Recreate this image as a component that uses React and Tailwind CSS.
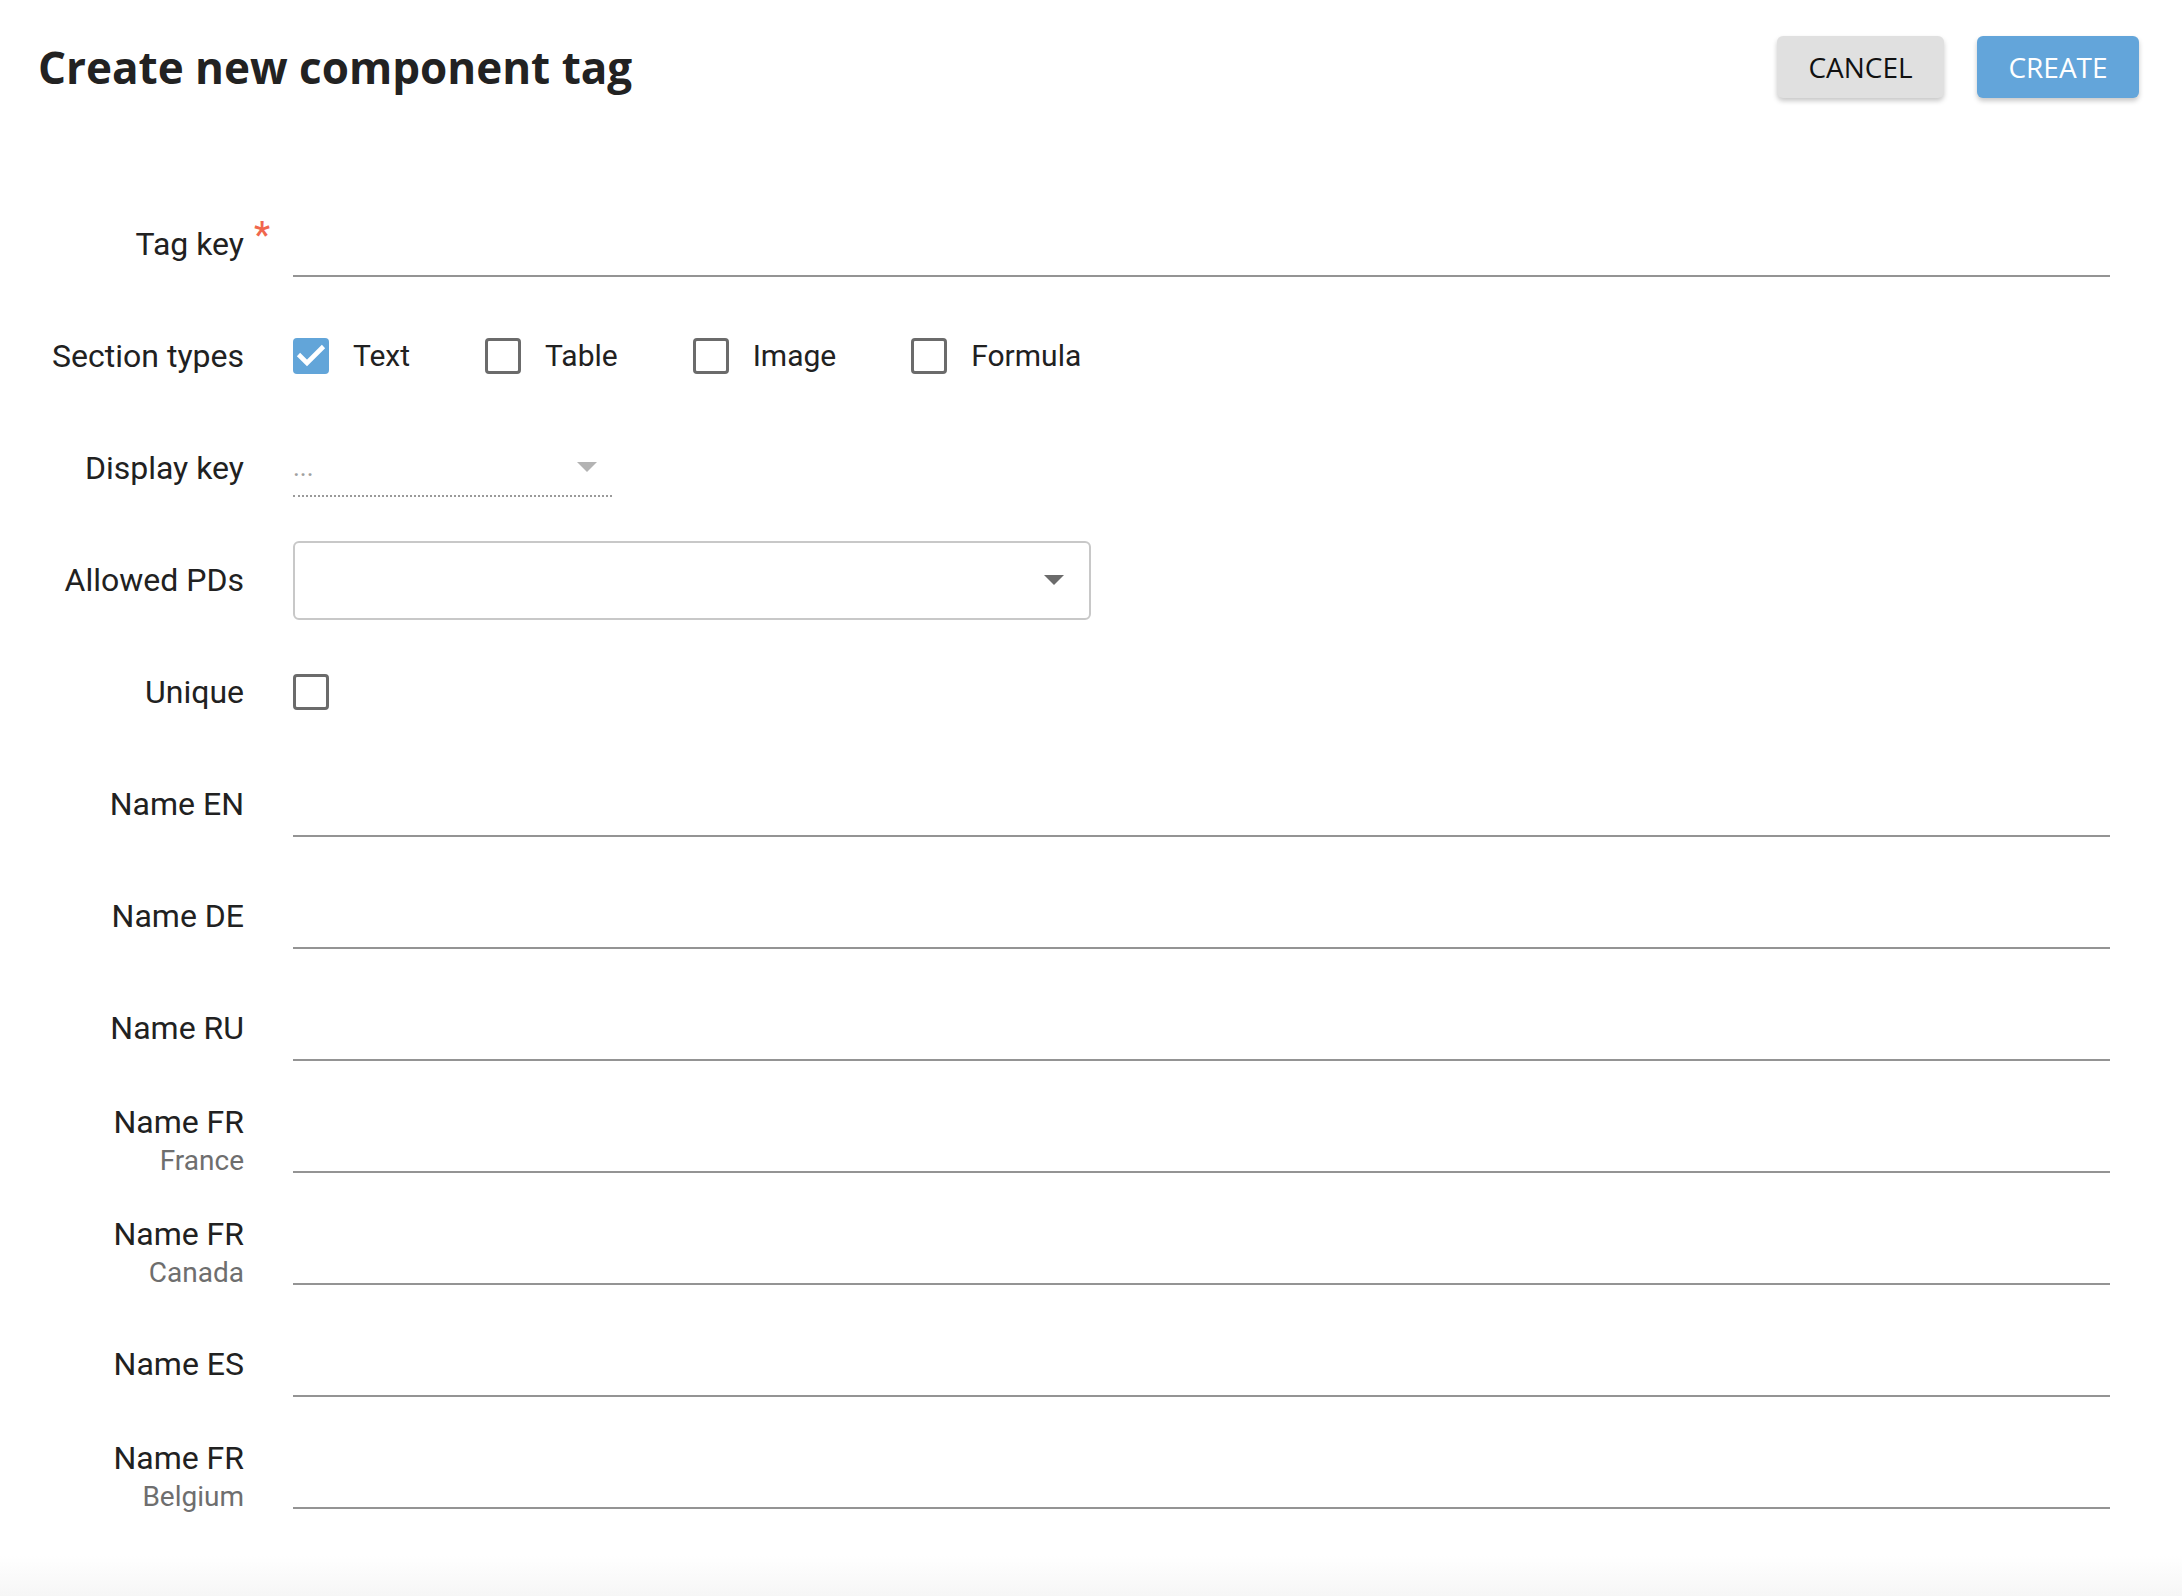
import React from "react";

const roboto = { fontFamily: "Roboto, 'Liberation Sans', sans-serif" };

function CheckBox({ checked }) {
  if (checked) {
    return (
      <div className="h-[36px] w-[36px] shrink-0 rounded-[4px] bg-[#62a5d9]">
        <svg width="36" height="36" viewBox="0 0 36 36" fill="none">
          <path d="M5.5 16.5L14 25L30.5 8.5" stroke="#fff" strokeWidth="4.6" strokeLinecap="butt" strokeLinejoin="miter" />
        </svg>
      </div>
    );
  }
  return <div className="h-[36px] w-[36px] shrink-0 rounded-[4px] border-[3px] border-[#6b6b6b] bg-white" />;
}

function Triangle({ color }) {
  return (
    <svg width="20" height="10" viewBox="0 0 20 10">
      <path d="M0 0h20L10 10z" fill={color} />
    </svg>
  );
}

function Row({ label, sub, required, children }) {
  return (
    <div className="flex h-[112px] items-center">
      <div className="flex w-[244px] shrink-0 flex-col items-end text-right">
        {sub ? (
          <>
            <span className="text-[32px] leading-[40px] text-[#212121]">{label}</span>
            <span className="text-[28px] leading-[37px] text-[#6e6e6e]">{sub}</span>
          </>
        ) : (
          <span className="relative inline-block text-[32px] leading-[40px] text-[#212121]">
            {label}
            {required && (
              <span className="absolute left-full top-[-7px] ml-[10px] text-[36px] font-medium leading-none text-[#f0674d]">*</span>
            )}
          </span>
        )}
      </div>
      <div className="ml-[49px] flex-1">{children}</div>
    </div>
  );
}

function Line() {
  return <div className="h-[66px] border-b-2 border-[#949494]" />;
}

function Check({ checked, label }) {
  return (
    <div className="mr-[75px] flex items-center">
      <CheckBox checked={checked} />
      <span className="ml-[24px] text-[30px] leading-[40px] text-[#212121]">{label}</span>
    </div>
  );
}

export default function App() {
  return (
    <div className="flex h-[1596px] w-full flex-col bg-white" style={roboto}>
      <div className="flex items-center justify-between pl-[38px] pr-[43px] pt-[36px]" style={{ fontFamily: "'Open Sans', 'Liberation Sans', sans-serif" }}>
        <h1 className="text-[44px] font-bold leading-none text-[#222]">Create new component tag</h1>
        <div className="flex items-center gap-[33px]">
          <button className="h-[62px] w-[167px] rounded-[6px] bg-[#e0e0e0] text-[28px] text-[#111] shadow-[0_3px_5px_rgba(0,0,0,0.22)]">CANCEL</button>
          <button className="h-[62px] w-[162px] rounded-[6px] bg-[#63a5da] text-[28px] text-white shadow-[0_3px_5px_rgba(0,0,0,0.22)]">CREATE</button>
        </div>
      </div>

      <div className="mt-[90px] flex flex-col pr-[72px]">
        <Row label="Tag key" required>
          <Line />
        </Row>
        <Row label="Section types">
          <div className="flex items-center">
            <Check checked label="Text" />
            <Check label="Table" />
            <Check label="Image" />
            <Check label="Formula" />
          </div>
        </Row>
        <Row label="Display key">
          <div className="flex h-[58px] w-[319px] items-center justify-between border-b-2 border-dotted border-[#9a9a9a] pr-[15px]">
            <span className="text-[26px] text-[#a0a0a0]">...</span>
            <Triangle color="#b3b3b3" />
          </div>
        </Row>
        <Row label="Allowed PDs">
          <div className="flex h-[79px] w-[798px] items-center justify-end rounded-[6px] border-2 border-[#c8c8c8] pr-[25px]">
            <Triangle color="#6b6b6b" />
          </div>
        </Row>
        <Row label="Unique">
          <CheckBox />
        </Row>
        <Row label="Name EN">
          <Line />
        </Row>
        <Row label="Name DE">
          <Line />
        </Row>
        <Row label="Name RU">
          <Line />
        </Row>
        <Row label="Name FR" sub="France">
          <Line />
        </Row>
        <Row label="Name FR" sub="Canada">
          <Line />
        </Row>
        <Row label="Name ES">
          <Line />
        </Row>
        <Row label="Name FR" sub="Belgium">
          <Line />
        </Row>
      </div>
      <div className="flex-1" />
      <div className="h-[40px] bg-gradient-to-b from-white to-[#f6f6f6]" />
    </div>
  );
}
